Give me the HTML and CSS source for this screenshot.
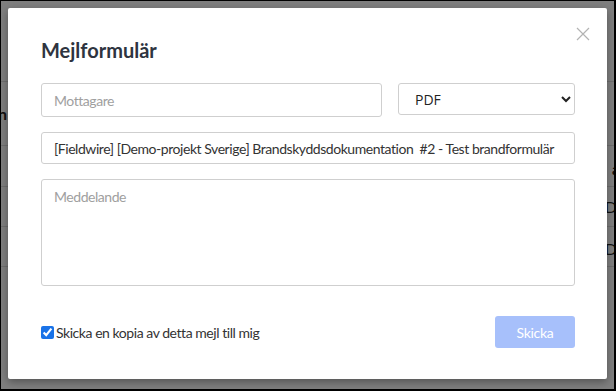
FILE: index.html
```html
<!DOCTYPE html>
<html lang="sv">
<head>
<meta charset="utf-8">
<title>Mejlformulär</title>
<link rel="stylesheet" href="styles.css">
</head>
<body>
<div class="page">
  <div class="bg-row r1"></div>
  <div class="bg-row r2"><span class="bg-left">n</span></div>
  <div class="bg-row r3"><span class="bg-right">a</span></div>
  <div class="bg-row r4"><span class="bg-right">D</span></div>
  <div class="bg-row r5"><span class="bg-right">D</span></div>
</div>
<div class="overlay">
  <div class="modal">
    <button class="close" aria-label="Stäng">
      <svg width="14" height="14" viewBox="0 0 14 14"><path d="M1 1L13 13M13 1L1 13" stroke="#b3b3b3" stroke-width="1.2" fill="none"/></svg>
    </button>
    <h1 class="title">Mejlformulär</h1>
    <div class="row">
      <input class="field recipient" type="text" placeholder="Mottagare">
      <select class="field format">
        <option>PDF</option>
      </select>
    </div>
    <input class="field subject" type="text" value="[Fieldwire] [Demo-projekt Sverige] Brandskyddsdokumentation  #2 - Test brandformulär">
    <textarea class="field message" placeholder="Meddelande"></textarea>
    <div class="footer">
      <label class="copy"><input type="checkbox" checked> Skicka en kopia av detta mejl till mig</label>
      <button class="send" disabled>Skicka</button>
    </div>
  </div>
</div>
<div class="frame"></div>
</body>
</html>
```
FILE: styles.css
```css
* { box-sizing: border-box; }
html, body { margin: 0; padding: 0; }
body {
  width: 616px;
  height: 391px;
  overflow: hidden;
  background: #fff;
  font-family: Lato, "Open Sans", sans-serif;
  position: relative;
}
.page {
  padding-top: 6px;
}
.bg-row {
  border-bottom: 1px solid #dcdcdc;
  display: flex;
  justify-content: space-between;
  align-items: center;
  font-size: 16px;
  color: #222;
}
.r1 { height: 76px; }
.r2 { height: 64px; font-weight: bold; }
.r3 { height: 41px; font-weight: bold; padding-top: 4px; }
.r4 { height: 40px; }
.r5 { height: 40px; padding-top: 3px; }
.bg-left { margin-left: -2px; }
.bg-right { margin-left: auto; margin-right: -1px; }
.r3 .bg-right { margin-right: -4px; }
.overlay {
  position: absolute;
  inset: 0;
  background: rgba(0, 0, 0, 0.5);
  padding: 8px 9px 12px 8px;
}
.modal {
  position: relative;
  background: #fff;
  width: 599px;
  height: 371px;
  border-radius: 2px;
  box-shadow: 0 3px 8px rgba(0,0,0,0.35);
  padding: 31px 32px 0 33px;
}
.close {
  position: absolute;
  top: 19px;
  right: 17px;
  border: 0;
  background: none;
  padding: 0;
  width: 14px;
  height: 14px;
  display: block;
}
.close svg { display: block; }
.title {
  margin: 0 0 21px;
  font-size: 20px;
  line-height: 23px;
  font-weight: 700;
  color: #2e3440;
}
.row {
  display: flex;
  align-items: flex-start;
  gap: 16px;
}
.field {
  font-family: Lato, "Open Sans", sans-serif;
  font-size: 14px;
  letter-spacing: -0.45px;
  color: #333;
  border: 1px solid #cfcfcf;
  border-radius: 3px;
  background: #fff;
  padding: 0 12px;
  outline: none;
}
.field::placeholder { color: #a0a0a0; }
.recipient {
  width: 341px;
  height: 34px;
}
.format {
  width: 177px;
  height: 32px;
  padding: 0 8px 0 12px;
  color: #222;
  letter-spacing: 0;
  font-family: "Open Sans", sans-serif;
  appearance: auto;
}
.subject {
  display: block;
  margin-top: 15px;
  width: 534px;
  height: 32px;
}
.message {
  display: block;
  margin-top: 15px;
  width: 534px;
  height: 107px;
  padding-top: 8px;
  resize: none;
}
.footer {
  margin-top: 30px;
  display: flex;
  justify-content: space-between;
  align-items: center;
}
.copy {
  display: flex;
  align-items: center;
  font-size: 14px;
  letter-spacing: -0.45px;
  color: #333;
  gap: 2px;
}
.copy input {
  margin: 0;
  width: 13px;
  height: 13px;
  accent-color: #1a73e8;
}
.send {
  width: 80px;
  height: 32px;
  border: 0;
  border-radius: 3px;
  background: #a7c0fb;
  color: #fff;
  font-family: Lato, sans-serif;
  font-size: 14px;
  letter-spacing: -0.3px;
}
.frame {
  position: absolute;
  inset: 0;
  border-style: solid;
  border-color: #000;
  border-width: 1px 2px 2px 1px;
  pointer-events: none;
}
```
